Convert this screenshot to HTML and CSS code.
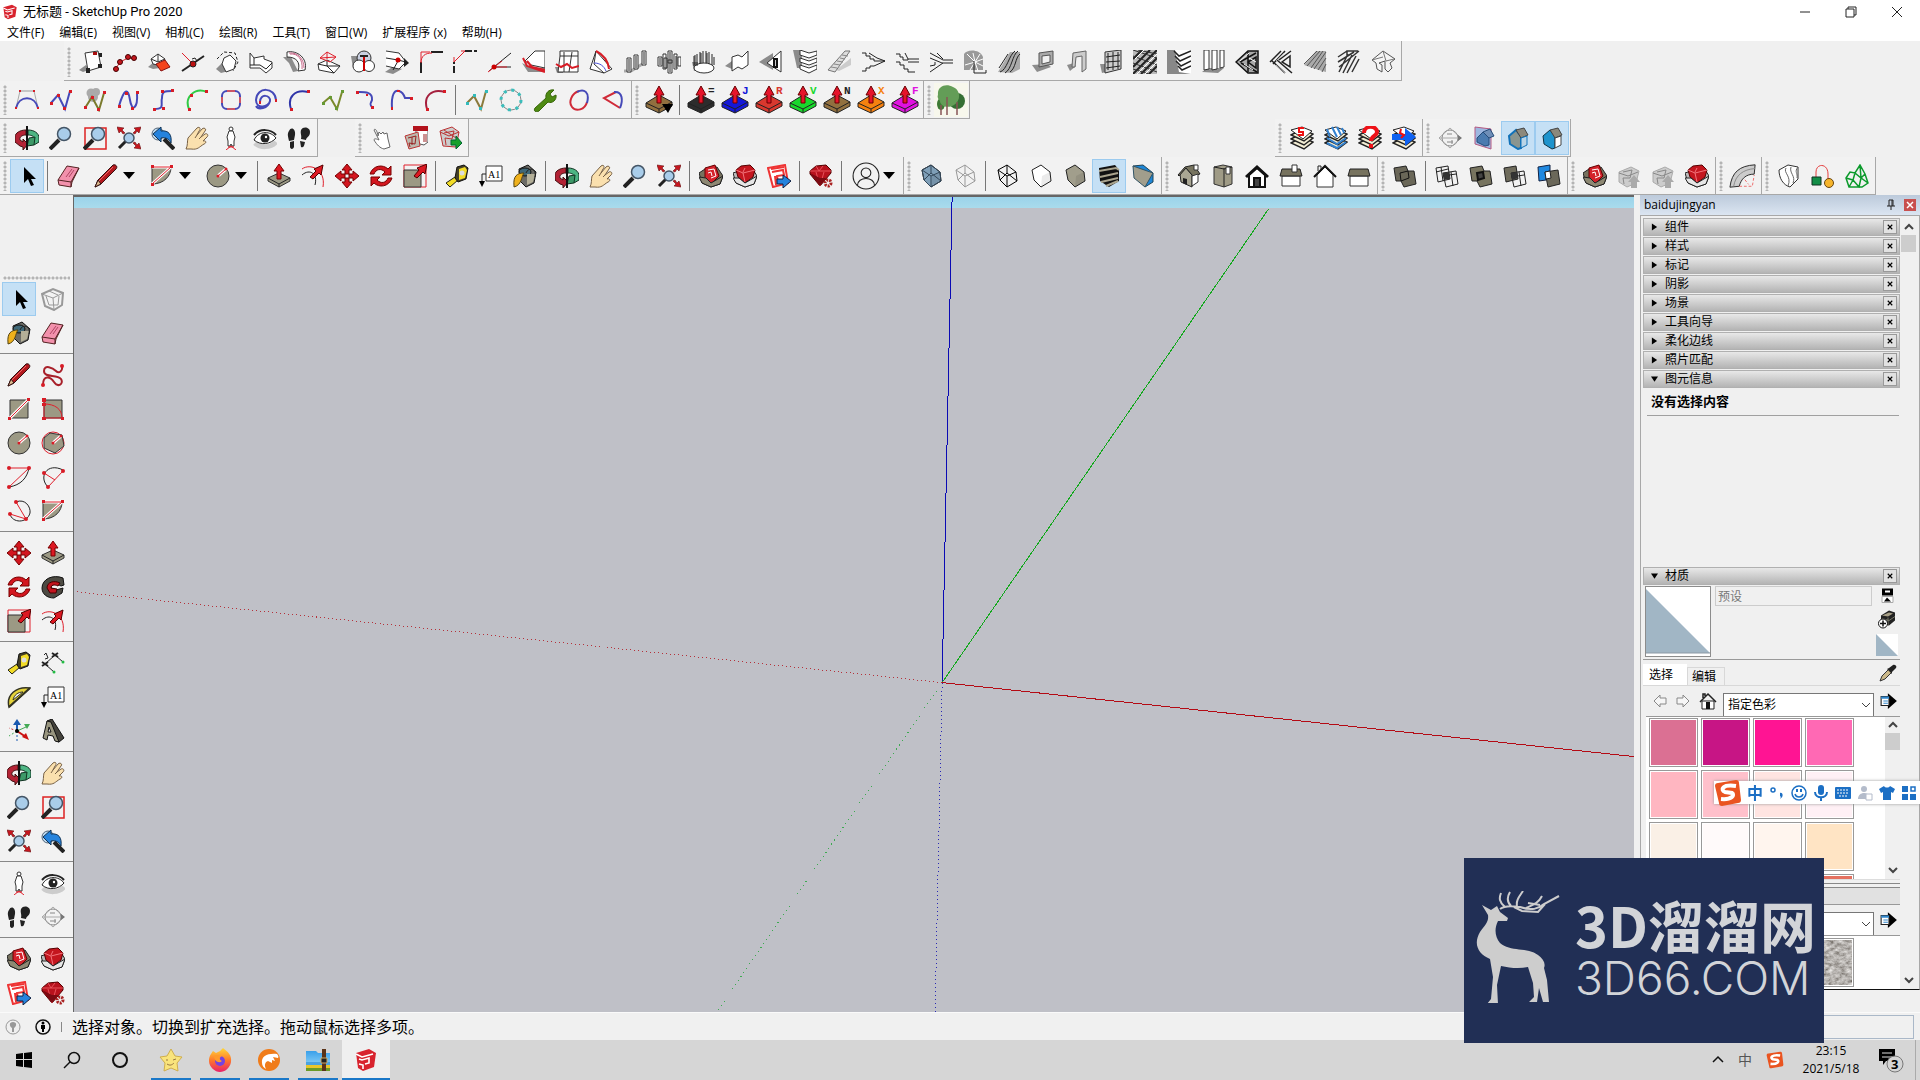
FILE: index.html
```html
<!DOCTYPE html>
<html lang="zh-CN">
<head>
<meta charset="utf-8">
<title>无标题 - SketchUp Pro 2020</title>
<link rel="stylesheet" href="styles.css">
</head>
<body>
<svg class="sprite" aria-hidden="true">
<defs>
<linearGradient id="fox" x1="0" y1="0" x2="0" y2="1"><stop offset="0" stop-color="#ffd83a"/><stop offset=".5" stop-color="#ff7a2a"/><stop offset="1" stop-color="#e8206a"/></linearGradient>
<linearGradient id="sky" x1="0" y1="0" x2="0" y2="1"><stop offset="0" stop-color="#3aa0ea"/><stop offset="1" stop-color="#7cc8f5"/></linearGradient>
<filter id="stone"><feTurbulence type="fractalNoise" baseFrequency=".18 .3" numOctaves="4"/><feColorMatrix values=".9 0 0 0 .02  .9 0 0 0 0  .9 0 0 0 -.02  0 0 0 0 1"/></filter>
</defs>
<!-- application mark -->
<symbol id="i-app" viewBox="0 0 24 24"><path d="M2 5 15 1l7 4-2 14-11 4-5-3z" fill="#d8232e"/><path d="M2 6l6 3 11-3M5 11l3 1 7-2v5l-4 1M5 16l4 1v4" fill="none" stroke="#fff" stroke-width="1.6"/></symbol>
<!-- shape and architecture plug-ins -->
<symbol id="i-stand" viewBox="0 0 24 24"><path d="M0 20l7-5 3 5-6 2z" class="g"/><path d="M6 3l13-2 3 16-13 4z" class="w"/><path d="M14 2h4v3h-4z" fill="#a11"/><path d="M7 18h4v5H7zM19 14h4v4h-4zM20 3h3v4h-3z" fill="#222"/></symbol>
<symbol id="i-dots" viewBox="0 0 24 24"><path d="M2 20l5-8 8-4 8 1" class="r"/><g fill="#c3161d" stroke="#400"><circle cx="3" cy="19" r="2.5"/><circle cx="7" cy="12" r="2.5"/><circle cx="15" cy="7" r="2.5"/><circle cx="21" cy="8" r="2.5"/></g></symbol>
<symbol id="i-flip" viewBox="0 0 24 24"><path d="M1 17l6-5 6 6-7 1z" class="g"/><path d="M4 9l7-5 7 5-3 7-9-2zM4 9l7 3 7-3M11 4v8" class="w"/><path d="M9 14l9-4 5 7-9 4z" fill="#f4431d" stroke="#811"/></symbol>
<symbol id="i-cross" viewBox="0 0 24 24"><path d="M1 21 23 6" class="k2"/><path d="M1 3l12 12" class="r"/><circle cx="12" cy="14" r="3" fill="#b11" stroke="#222"/><path d="M11 9l3-1 2 3" class="k"/></symbol>
<symbol id="i-dashpoly" viewBox="0 0 24 24"><path d="M1 19l6-6 7 8-8 2z" class="g"/><path d="M2 9l7-7 11 1 3 9-5 9" class="k" stroke-dasharray="3 2"/><path d="M9 8l6-3 6 6-2 8-8 3-4-8z" class="w"/></symbol>
<symbol id="i-block" viewBox="0 0 24 24"><path d="M1 3l4 5 10-2v3l8 3v6l-6 5-6-5H1z" class="w"/><path d="M1 15h10l6 4 6-6M5 8v7" class="k"/></symbol>
<symbol id="i-tube" viewBox="0 0 24 24"><path d="M0 7h8l7 14-5 1-4-9z" class="g"/><path d="M4 2C14 0 25 8 22 20l-7 1c3-9-2-14-11-14z" class="w"/><path d="M7 4c8-1 13 6 12 15M6 3c9-1 15 6 15 15" fill="none" stroke="#c7698a"/></symbol>
<symbol id="i-roofbox" viewBox="0 0 24 24"><path d="M1 14l9-4 13 6-6 7-15-3z" class="w"/><path d="M10 10v6l7 7M1 14l9 2 13 0" class="k"/><path d="M3 8l7-6 9 5-6 5zM3 8l16-1M10 2v7" class="r"/></symbol>
<symbol id="i-spheres" viewBox="0 0 24 24"><path d="M0 6h9v12H2z" class="g"/><circle cx="13" cy="8" r="7" fill="#c9cfe0" stroke="#333"/><circle cx="8" cy="16" r="6" class="w"/><circle cx="18" cy="16" r="5.5" class="w"/><path d="M13 5v16" stroke="#c00" stroke-width="2"/><path d="M9 6h8" class="k2"/></symbol>
<symbol id="i-corner" viewBox="0 0 24 24"><path d="M0 22l9-6 8 3-9 5z" class="g"/><path d="M1 1l13 2 7 9-7 7-13-3" class="w"/><path d="M1 8l12 2 8 2M13 11l-5 9" class="k"/><circle cx="13" cy="10" r="2.5" fill="#c00"/><path d="M19 8l5 5-5 4z" fill="#222"/></symbol>
<symbol id="i-fillet" viewBox="0 0 24 24"><path d="M12 2h12M2 23V12" class="k2"/><path d="M2 13C2 6 6 3 13 3M2 12V2h9" class="r"/></symbol>
<symbol id="i-chamfer" viewBox="0 0 24 24"><path d="M12 1h12M1 23V12" class="k2" stroke-dasharray="7 2"/><path d="M1 12 12 1H8M1 12V7" class="r"/></symbol>
<symbol id="i-angle" viewBox="0 0 24 24"><path d="M2 21 24 3M6 17h18" class="k"/><path d="M1 22l14-11M7 17h13" class="r"/><circle cx="7" cy="17" r="2.500" fill="#c00"/></symbol>
<symbol id="i-polyred" viewBox="0 0 24 24"><path d="M1 13l6 9h17v-4H11z" class="g"/><path d="M4 11 14 1h10v17L10 15z" class="w"/><path d="M2 8l4 8 18 6M6 11l5 6 13 3" class="r2"/></symbol>
<symbol id="i-cage" viewBox="0 0 24 24"><path d="M0 17h8v6H2z" class="g"/><path d="M5 1h18v5H5zM5 6 3 22h20V6M9 2v20M17 2l-3 20" class="w"/><path d="M1 14l5 3 6-3 5 4 7-2" class="r2"/></symbol>
<symbol id="i-sail" viewBox="0 0 24 24"><path d="M7 1 1 19l14 4 8-4zM7 1l-2 13 10 9" class="w" stroke="#666"/><path d="M7 1c8 4 12 9 13 18" class="r2"/><path d="M5 13c6 0 10 3 12 8" class="b"/></symbol>
<symbol id="i-pillars" viewBox="0 0 24 24"><path d="M1 21h7l13-8" stroke="#aaa" stroke-width="3" fill="none"/><path d="M4 8h4v14H4zM11 5h4v14h-4zM19 1h4v14h-4z" class="w"/><path d="M6 9v12M13 6v12M21 2v12" class="k"/></symbol>
<symbol id="i-columns" viewBox="0 0 24 24"><path d="M1 7h4v9H1zM6 4h3v15H6zM11 1h4v12h-4zM17 4h3v15h-3zM11 10h4v13h-4zM21 7h3v9h-3zM7 8h3v10H7z" class="w"/><path d="M13 2v20M3 8v7M19 6v12" class="k"/></symbol>
<symbol id="i-arc" viewBox="0 0 24 24"><path d="M1 12h6v9H3z" class="g"/><ellipse cx="13" cy="18" rx="10" ry="5" class="w"/><path d="M3 6v10M6 4v12M9 2v12M12 1v12M15 1v12M18 2v12M21 4v11M23 7v8" class="k"/><path d="M4 5v10M10 3v10M16 3v10" class="k"/></symbol>
<symbol id="i-fold" viewBox="0 0 24 24"><path d="M0 16l7-5v8z" class="g"/><path d="M7 7l6-2 4 2 6-6v14l-6 4-4-2-6 4z" class="w"/></symbol>
<symbol id="i-wedge" viewBox="0 0 24 24"><path d="M0 12 14 3v17z" class="g"/><path d="M8 13 22 1v21z" class="w"/><path d="M15 9h3v8h-3z" fill="#ccc" stroke="#111" stroke-width="2"/></symbol>
<symbol id="i-shelves" viewBox="0 0 24 24"><path d="M0 0h9v18H4z" class="g"/><path d="M7 0l9 3 8-2v4l-8 3-9-3zM7 8l9 3 8-3v4l-8 3-9-3zM7 15l9 3 8-3v4l-8 4-9-4z" class="w"/></symbol>
<symbol id="i-ramp" viewBox="0 0 24 24"><path d="M9 20 24 8v7l-12 6z" fill="#ccc"/><path d="M1 20 18 1h5L8 22z" fill="#ddd" stroke="#777"/><path d="M4 17l6 1M7 14l6 1M10 11l6 1M13 8l5 1M15 5l6 1" stroke="#888"/></symbol>
<symbol id="i-stair1" viewBox="0 0 24 24"><path d="M1 3h4v3h4v3h4v2h11L13 16H9v2H5v3H1M8 3l8 5 8 3" class="k"/></symbol>
<symbol id="i-stair2" viewBox="0 0 24 24"><path d="M1 4h4v3h3v3h5v-1h11M1 12h4v3h4v4h4v3h7M13 12h11M10 3l3 6" class="k"/></symbol>
<symbol id="i-stair3" viewBox="0 0 24 24"><path d="M1 3l13 7h10M1 8l12 5h11M1 22l13-9M1 16l5-1v-3M8 3l6 6" class="k"/></symbol>
<symbol id="i-spiral" viewBox="0 0 24 24"><path d="M1 4c3-5 16-5 19 3v13H1z" fill="#999"/><path d="M12 12 4 4M12 12l-2-9M12 12l5-8M12 12l8-3M12 12l8 4M12 12l3 9M12 12l-5 8M12 12 2 15" stroke="#fff"/><path d="M11 11v12h12v-3" class="k"/></symbol>
<symbol id="i-escalator" viewBox="0 0 24 24"><path d="M1 22 13 2h10v17l-8 4z" fill="#aaa"/><path d="M3 22C10 20 12 5 18 1M8 23c7-4 7-18 13-22M13 22c6-4 5-14 10-18M2 18l9-14" class="k"/></symbol>
<symbol id="i-frame" viewBox="0 0 24 24"><path d="M1 15l15-1 4 3-14 5z" class="g"/><path d="M8 3l14-2v13L8 17z" fill="#aaa" stroke="#555"/><path d="M11 6l8-1v7l-8 2z" fill="#f1f1f1" stroke="#555"/></symbol>
<symbol id="i-door" viewBox="0 0 24 24"><path d="M2 15l7-2 2 3-6 5z" class="g"/><path d="M7 17 8 3l13-2v18l-4 3V6l-6 1-1 10z" fill="#ccc" stroke="#666"/></symbol>
<symbol id="i-grid" viewBox="0 0 24 24"><path d="M1 14h6v8l-4 1z" class="g"/><path d="M6 2 22 0v19L6 23z" fill="#ccc" stroke="#333"/><path d="M9 3v17M14 2v18M19 2v17M7 7l14-2M7 12l14-1M7 18l14-2" class="k"/></symbol>
<symbol id="i-lattice" viewBox="0 0 24 24"><path d="M0 0h24v24H0z" fill="#bbb"/><path d="M0 9 9 0M0 17 17 0M0 24 24 0M8 24 24 8M16 24l8-8" class="k2"/><path d="M0 6l24 9M0 0l24 8M0 13l24 9M5 0l19 4M0 19l16 5" stroke="#333"/><path d="M2 9 11 0M4 24 24 4M12 24l12-12" stroke="#fff"/></symbol>
<symbol id="i-chevron" viewBox="0 0 24 24"><path d="M0 0h24v24H0z" fill="#888"/><path d="M8 0h16v24l-12-2z" fill="#fff"/><path d="M7 1l5 5L24 1M8 6l5 5 11-5M9 11l5 5 10-5M11 16l4 4 9-4" fill="none" stroke="#222" stroke-width="1.500"/></symbol>
<symbol id="i-posts" viewBox="0 0 24 24"><path d="M1 22l5-4h17l-6 5z" class="g"/><path d="M3 0v20l5-1V0zM11 0v20l5-1V0zM19 0v18l4-1V0z" class="w"/></symbol>
<symbol id="i-truss" viewBox="0 0 24 24"><path d="M1 12 13 1h10v22H13z" fill="#aaa" stroke="#111" stroke-width="1.500"/><path d="M5 12 21 3M6 13l16 9M13 2v20M13 12l8-5v11z" stroke="#111" stroke-width="1.500" fill="none"/><path d="M5 11 14 3M9 14l9 6M14 8l7 4" stroke="#fff"/></symbol>
<symbol id="i-truss2" viewBox="0 0 24 24"><path d="M1 12 12 1M4 14l12-13M2 10l14 13M8 10l15 13M10 10 22 1M13 12l8-6v11z" fill="none" stroke="#222" stroke-width="1.500"/><path d="M7 11l8-8M7 15l9 8" stroke="#aaa"/></symbol>
<symbol id="i-slats" viewBox="0 0 24 24"><path d="M1 15 13 1h10v21l-4-1z" fill="#aaa"/><path d="M1 14 14 1M4 16 17 1M8 18 20 1M11 19 23 2M15 20l8-12M19 22l4-8" stroke="#555"/></symbol>
<symbol id="i-slats2" viewBox="0 0 24 24"><path d="M2 22 11 4M6 23 15 5M10 23l9-17M15 22l7-13M1 7l9-6M1 12 17 2M2 17 22 1M10 6V1h11" fill="none" stroke="#333" stroke-width="1.500"/></symbol>
<symbol id="i-hip" viewBox="0 0 24 24"><path d="M12 1 1 10l4 3 1 6 5 3v-7l-3-2 6-2v8l3 3 4-4-2-5 5-4z" fill="#f6f6f6" stroke="#555"/><path d="M12 1l3 10 8-2M1 10l11-3" stroke="#777" fill="none"/></symbol>
<!-- curves -->
<symbol id="i-c1" viewBox="0 0 24 24"><path d="M5 3h14" stroke="#999"/><path d="M5 3 1 20M19 3l4 17" stroke="#aaa"/><path d="M1 20C4 7 20 7 23 20" class="b2"/><path d="M4 2h2v2H4zM18 2h2v2h-2zM0 19h2v2H0zM22 19h2v2h-2z" class="R"/></symbol>
<symbol id="i-c2" viewBox="0 0 24 24"><path d="M2 15 9 7l7 14 5-18" class="b2"/><path d="M1 14h3v3H1zM8 6h3v3H8zM14 19h3v3h-3zM20 2h3v3h-3z" class="R"/></symbol>
<symbol id="i-c3" viewBox="0 0 24 24"><circle cx="8" cy="5" r="4.500" fill="#aaa"/><circle cx="13" cy="4" r="4" fill="#aaa"/><circle cx="10" cy="9" r="5" fill="#aaa"/><path d="M2 20 9 9l7 13 5-17" fill="none" stroke="#7a7a2c" stroke-width="2"/><path d="M1 18h3v3H1zM8 8h3v3H8zM14 20h3v3h-3zM20 3h3v3h-3z" class="R"/></symbol>
<symbol id="i-c4" viewBox="0 0 24 24"><path d="M2 18C7 1 11-1 13 12s8 8 7-7" class="b2"/><path d="M1 17h3v3H1zM8 4h3v3H8zM14 19h3v3h-3zM19 3h3v3h-3z" class="R"/></symbol>
<symbol id="i-c5" viewBox="0 0 24 24"><path d="M3 21c12 0 6-5 8-11 0-7 3-7 10-7" class="b2"/><path d="M2 20h3v3H2zM11 19h3v3h-3zM10 2h3v3h-3zM20 1h3v3h-3z" class="R"/></symbol>
<symbol id="i-c6" viewBox="0 0 24 24"><path d="M4 21C-1 9 10-1 22 4" fill="none" stroke="#31ca44" stroke-width="2"/><path d="M3 20h3v3H3zM5 6h3v3H5zM20 2h3v3h-3z" class="R"/></symbol>
<symbol id="i-c7" viewBox="0 0 24 24"><rect x="3" y="3" width="18" height="18" rx="5" class="b2"/><path d="M8 3h8M8 21h8M3 9v6M21 9v6" stroke="#c56" stroke-width="2"/></symbol>
<symbol id="i-c8" viewBox="0 0 24 24"><path d="M7 14c0-9 11-7 10-1s-14 9-14-1C4-2 22-1 23 12M17 13c-2 8-12 9-14 5" class="b2"/><path d="M6 13h2v3H6zM22 11h2v3h-2z" class="R"/></symbol>
<symbol id="i-c9" viewBox="0 0 24 24"><path d="M4 21C0 9 8 1 21 4" fill="none" stroke="#3035a8" stroke-width="2"/><path d="M3 20h3v3H3zM20 2h3v3h-3z" class="R"/></symbol>
<symbol id="i-c10" viewBox="0 0 24 24"><path d="M2 15 9 9l7 12 5-17" fill="none" stroke="#7a8a2c" stroke-width="2"/><path d="M1 14h3v3H1zM8 8h3v3H8zM14 19h3v3h-3zM20 2h3v3h-3z" fill="#693"/></symbol>
<symbol id="i-c11" viewBox="0 0 24 24"><path d="M2 4c6 0 16-1 15 8-1 3-3 4 0 7" class="b2"/><path d="M1 3h3v3H1zM11 6h2v2h-2zM16 18h3v3h-3z" class="R"/></symbol>
<symbol id="i-c12" viewBox="0 0 24 24"><path d="M3 21C2 5 6 2 10 3s5 4 6 7h6" class="b2"/><path d="M2 19h2v3H2zM8 2h3v2H8zM21 9h3v3h-3z" class="R"/></symbol>
<symbol id="i-c13" viewBox="0 0 24 24"><path d="M4 21C0 8 9 0 22 4" fill="none" stroke="#a5203e" stroke-width="2"/><path d="M3 20h3v3H3zM20 2h3v3h-3z" class="R"/></symbol>
<symbol id="i-c14" viewBox="0 0 24 24"><path d="M2 15l7-7 7 13 5-18" fill="none" stroke="#8a7a3c" stroke-width="2"/><path d="M1 14h3v3H1zM8 6h3v3H8zM14 19h3v3h-3zM20 2h3v3h-3z" fill="#3bb"/></symbol>
<symbol id="i-c15" viewBox="0 0 24 24"><circle cx="12" cy="12" r="10" fill="none" stroke="#888"/><circle cx="12" cy="12" r="10" fill="none" stroke="#3bbdbb" stroke-width="3" stroke-dasharray="3 4.850"/></symbol>
<symbol id="i-wrench" viewBox="0 0 24 24"><path d="M2 20 13 10c-1-5 3-9 8-8l-4 4 2 3 4-2c1 5-4 9-8 7L6 23c-3 2-6 0-4-3z" fill="#4e8a12" stroke="#39660a"/></symbol>
<symbol id="i-c16" viewBox="0 0 24 24"><path d="M12 3C5 5 1 14 5 19c4 5 13 3 15-5" fill="none" stroke="#d02a38" stroke-width="2"/><path d="M10 4c7-4 13 0 10 11" class="b2"/></symbol>
<symbol id="i-c17" viewBox="0 0 24 24"><path d="M19 20 3 10l12-6" fill="none" stroke="#d02a38" stroke-width="2"/><path d="M13 4c9-1 9 9 6 16" class="b2"/></symbol>
<!-- joint push pull -->
<symbol id="i-jpush" viewBox="0 0 28 28"><path d="M1 17 14 9l13 7v4l-13 7-13-6z" fill="currentColor" stroke="#222"/><path d="M1 17l13 6 13-7M14 23v4" fill="none" stroke="#222"/><path d="M12 17V9H9l5-9 5 9h-3v8z" fill="#e5142a" stroke="#600"/></symbol>
<!-- camera and navigation -->
<symbol id="i-orbit" viewBox="0 0 24 24"><path d="M11 4C5 4 0 7 0 11v5l5 4 3 1v3l5-6-5-5v3l-3-2c-1-3 2-5 6-5z" fill="#b32335" stroke="#411"/><path d="M13 4c6 0 11 3 11 8v4l-5 3-3-4 3-2c1-2-2-4-6-4z" fill="#4db583" stroke="#132"/><path d="M14 12l6-1-1 8-7 1z" fill="#3d9968" stroke="#132"/><path d="M12 0v24" stroke="#111" stroke-width="2"/></symbol>
<symbol id="i-zoom" viewBox="0 0 24 24"><path d="M1 23l9-9" stroke="#222" stroke-width="4"/><circle cx="15" cy="8" r="6.500" fill="#a9cdea" stroke="#456" stroke-width="1.500"/></symbol>
<symbol id="i-zoomwin" viewBox="0 0 24 24"><path d="M2 2h21v21H2z" fill="none" stroke="#d22" stroke-width="1.500"/><path d="M1 23l9-9" stroke="#222" stroke-width="4"/><circle cx="15" cy="8" r="6.500" fill="#a9cdea" stroke="#456" stroke-width="1.500"/></symbol>
<symbol id="i-extents" viewBox="0 0 24 24"><path d="M2 22l7-7" stroke="#222" stroke-width="3"/><circle cx="12" cy="12" r="5" fill="#a9cdea" stroke="#456" stroke-width="1.500"/><path d="M0 1l7 1-2 2 3 3-2 1-2-3-2 2zM24 1l-7 1 2 2-3 3 2 1 2-3 2 2zM24 23l-7-1 2-2-3-3 2-1 2 3 2-2z" fill="#c8161f" stroke="#611" stroke-width=".6"/></symbol>
<symbol id="i-prev" viewBox="0 0 24 24"><circle cx="7" cy="8" r="6" fill="#bcd8ee" stroke="#567"/><path d="M13 13l10 10" stroke="#222" stroke-width="4"/><path d="M2 8l8-7v4c8-1 11 4 10 12-2-4-5-6-10-5v4z" fill="#2583dd" stroke="#135"/></symbol>
<symbol id="i-pan" viewBox="0 0 24 24"><path d="M1 23c2-4 1-7 2-11l9-10c3-2 4 1 2 3l-2 4 5-6c2-2 5 0 3 2l-4 6 4-3c2-1 4 1 2 3l-4 4c3-1 4 2 1 3-5 3-6 6-13 5z" fill="#fae0ae" stroke="#776146"/><path d="M12 9l-2 3M16 11l-2 2" stroke="#776146"/></symbol>
<symbol id="i-person" viewBox="0 0 24 24"><circle cx="12" cy="3" r="2" class="w"/><path d="M10 5h4l2 6-1 4v5h-2l-1-2-1 2H9v-5l-1-4z" class="w"/><path d="M7 24l5-4 5 4M9 21h6" class="r"/></symbol>
<symbol id="i-eye" viewBox="0 0 24 24"><path d="M2 17c5 5 16 5 21-1" stroke="#ccc" stroke-width="5" fill="none"/><path d="M1 14C6 4 18 5 23 12 18 18 8 20 1 14z" fill="#fff" stroke="#222"/><circle cx="12" cy="12" r="4.500" fill="#222"/><circle cx="13" cy="11" r="1.200" fill="#fff"/><path d="M1 9C7 2 18 3 23 9" stroke="#222" stroke-width="2" fill="none"/></symbol>
<symbol id="i-feet" viewBox="0 0 24 24"><path d="M2 5C4 0 9 3 8 9l-1 5-5 1C1 10 0 8 2 5zM14 4c2-4 9-3 9 2s-4 5-4 8l-5-1c1-4-1-5 0-9zM3 16l4-1v6c-1 3-4 2-4 0zM13 15l5 1c-1 5-2 6-4 5z" fill="#222"/></symbol>
<symbol id="i-section" viewBox="0 0 24 24"><circle cx="12" cy="12" r="8" fill="none" stroke="#888"/><path d="M1 12h22M1 12l11-10 11 10-11 10z" fill="none" stroke="#aaa"/><path d="M20 9l4 3-4 3z" fill="#777"/><path d="M9 8h5M9 16h6M14 14v4" stroke="#888"/></symbol>
<symbol id="i-finger" viewBox="0 0 24 24"><path d="M4 4c1-2 3 0 4 6l1-4 2 2 2-2 1 2 3-1 1 6 2 8-6 2c-4-1-7-4-10-9 0-2 3-1 5 0z" fill="#fff" stroke="#666"/></symbol>
<symbol id="i-comp1" viewBox="0 0 24 24"><path d="M12 1h12v15l-4 3-8-2z" fill="#fff" stroke="#555"/><path d="M9 0h15v5H9z" fill="#b3121c"/><path d="M1 10l13-4 2 14-11 3z" fill="#bdb9ae" stroke="#b33"/><path d="M4 12l8-2-1 8-6-1 1 4M8 11v8M20 8v8M22 8v8" fill="none" stroke="#922"/></symbol>
<symbol id="i-comp2" viewBox="0 0 24 24"><path d="M2 5 14 1l7 5-3 15-13-1z" fill="#ccc" stroke="#b33"/><path d="M6 7l10-2-2 8-7-1 1 7M6 4l12 8M2 6l9 4 10-4" fill="none" stroke="#b33"/><path d="M13 14h5v-4l6 7-6 6v-4h-5z" fill="#17a02c" stroke="#063"/></symbol>
<!-- tags -->
<symbol id="i-tags" viewBox="0 0 24 24"><g fill="#f2ecd3" stroke="#222" stroke-width="1.500"><path d="M1 17l11-6 11 5-9 7z"/><path d="M1 13l11-6 11 5-9 7z"/><path d="M1 9l11-6 11 5-9 7z"/></g><path d="M1 4 12 1l10 4-9 8z" fill="#fff" stroke="#222"/></symbol>
<symbol id="i-tag-s" viewBox="0 0 24 24"><use href="#i-tags"/><path d="M14 2H9v4h4v3H8" fill="none" stroke="#e11" stroke-width="2"/></symbol>
<symbol id="i-tag-b" viewBox="0 0 24 24"><use href="#i-tags"/><path d="M3 3l3 8M8 1l5 10M13 1l4 8M18 2l2 5M3 12l10 6 9-6M3 17l10 5 9-6" fill="none" stroke="#3281cf" stroke-width="2"/></symbol>
<symbol id="i-tag-q" viewBox="0 0 24 24"><use href="#i-tags"/><path d="M6 7c0-8 13-8 13-1 0 4-6 4-6 9M13 18v4" fill="none" stroke="#ee1218" stroke-width="4"/></symbol>
<symbol id="i-tag-a" viewBox="0 0 24 24"><use href="#i-tags"/><path d="M0 8h13V2l11 9-11 9v-6H0z" fill="#0f62f2"/><path d="M9 3l-1 4 4 2-3 3" stroke="#e11" stroke-width="2" fill="none"/></symbol>
<symbol id="i-sec-h" viewBox="0 0 24 24"><path d="M3 1l16 2v20L3 18z" fill="#9db7e0" stroke="#b55a82"/><path d="M5 12l6-6 6 5v8l-4 1-8-4z" fill="#4a7bb0" stroke="#264c7a"/><path d="M11 6l7-3 4 7-5 2z" fill="#6f8fb8" stroke="#264c7a"/></symbol>
<symbol id="i-sec-1" viewBox="0 0 24 24"><path d="M3 10l7-6 5 6v12l-3 1-8-5z" fill="#8a958f" stroke="#1272b8" stroke-width="2"/><path d="M10 4l8-2 4 7-7 3z" fill="#8c897c" stroke="#444"/><path d="M15 12l6-2v9l-6 3z" fill="#b9d4e6" stroke="#1272b8"/></symbol>
<symbol id="i-sec-2" viewBox="0 0 24 24"><path d="M3 10l7-6 5 6v12l-3 1-8-5z" fill="#1f94cd" stroke="#134"/><path d="M10 4l8-2 4 7-7 3z" fill="#8c897c" stroke="#444"/><path d="M15 12l6-2v9l-6 3z" fill="#fff" stroke="#444"/></symbol>
<!-- drawing tools -->
<symbol id="i-select" viewBox="0 0 24 24"><path d="M9 3v16l4-4 3 7 3-1-3-6h5z" fill="#000"/></symbol>
<symbol id="i-eraser" viewBox="0 0 24 24"><path d="M1 16 10 2l12 2-7 14-1 5-12-2z" fill="#f291ac" stroke="#522"/><path d="M1 16l13 2 8-14M14 18v5" fill="none" stroke="#522"/><path d="M9 13l6-8M12 13l5-7" stroke="#b04565"/></symbol>
<symbol id="i-pencil" viewBox="0 0 24 24"><path d="M1 23l3-7L19 1c3-1 5 2 3 4L7 20z" fill="#b3191e" stroke="#311"/><path d="M1 23l3-7 3 4z" fill="#dbb98c" stroke="#311"/><path d="M5 17 19 3" stroke="#e66"/></symbol>
<symbol id="i-free" viewBox="0 0 24 24"><path d="M2 22C2 12 9 13 13 19s10 2 7-3C16 11 3 15 3 8S12 5 15 8s7 0 6-5" fill="none" stroke="#a8202a" stroke-width="2"/><circle cx="2" cy="22" r="2" class="R"/><circle cx="21" cy="3" r="2" class="R"/></symbol>
<symbol id="i-rect" viewBox="0 0 24 24"><path d="M3 3h18v18H3z" class="t"/><path d="M3 21 21 3" stroke="#fff" stroke-width="3"/><path d="M3 21 21 3" class="r"/><path d="M1 20h3v3H1zM20 1h3v3h-3z" class="R"/></symbol>
<symbol id="i-rrect" viewBox="0 0 24 24"><path d="M3 3h18v18H3z" class="t"/><path d="M3 3v18h18c0-9-7-14-18-14" class="r"/><path d="M1 1h4v4H1zM1 6h4v3H1zM1 20h4v3H1zM20 20h3v3h-3z" class="R"/></symbol>
<symbol id="i-circle" viewBox="0 0 24 24"><circle cx="12" cy="12" r="11" class="t"/><path d="M12 12l8-7" stroke="#fff" stroke-width="3"/><path d="M12 12l8-7" class="r"/><circle cx="12" cy="12" r="1.500" class="R"/><circle cx="20" cy="5" r="1.500" class="R"/></symbol>
<symbol id="i-polygon" viewBox="0 0 24 24"><circle cx="12" cy="12" r="11" class="r"/><path d="M9 2l12 2 2 11-9 7-11-5V7z" class="t"/><path d="M12 12l8-7" stroke="#fff" stroke-width="3"/><path d="M12 12l8-7" class="r"/><circle cx="12" cy="12" r="1.500" class="R"/><circle cx="20" cy="5" r="1.500" class="R"/></symbol>
<symbol id="i-arc2" viewBox="0 0 24 24"><path d="M2 22C14 20 20 13 22 3" class="k"/><path d="M2 3h20L2 22" class="r"/><circle cx="2" cy="3" r="2" class="R"/><circle cx="22" cy="3" r="2" class="R"/><circle cx="2" cy="22" r="2" class="R"/></symbol>
<symbol id="i-arc3" viewBox="0 0 24 24"><path d="M7 22C-3 12 6-3 22 5" class="k"/><path d="M7 22 22 6M3 8l11 7" class="r"/><circle cx="22" cy="6" r="2" class="R"/><circle cx="7" cy="22" r="2" class="R"/><circle cx="3" cy="8" r="2" class="R"/></symbol>
<symbol id="i-arc4" viewBox="0 0 24 24"><path d="M9 3c9-4 15 5 14 11-3 11-18 10-20 1" class="k"/><path d="M9 3l10 17-16-5" class="r"/><circle cx="9" cy="3" r="2" class="R"/><circle cx="3" cy="15" r="2" class="R"/><circle cx="19" cy="20" r="2" class="R"/></symbol>
<symbol id="i-pie" viewBox="0 0 24 24"><path d="M2 3h19c0 9-7 17-19 17z" class="t"/><path d="M2 20 21 3H2" stroke="#fff" stroke-width="3" fill="none"/><path d="M2 20 21 3H2" class="r"/><path d="M1 1h3v3H1zM20 1h3v3h-3zM1 19h3v3H1z" class="R"/></symbol>
<symbol id="i-push" viewBox="0 0 24 24"><path d="M1 14l11-5 11 5v3l-11 6-11-6z" class="t"/><path d="M1 14l11 6 11-6M12 20v3" class="k"/><path d="M10 15V7H7l5-7 5 7h-3v8z" fill="#dd1822" stroke="#700"/></symbol>
<symbol id="i-offset" viewBox="0 0 24 24"><path d="M1 5C9-1 25 5 22 23" class="r"/><path d="M1 11c8-7 16-1 13 10" class="k"/><path d="M9 13l6-6-2-2 9-4-2 10-2-2-6 6z" fill="#dd1822" stroke="#500"/></symbol>
<symbol id="i-move" viewBox="0 0 24 24"><path d="M12 0l5 6h-3v4h-4V6H7zM12 24l5-6h-3v-4h-4v4H7zM0 12l6-5v3h4v4H6v3zM24 12l-6-5v3h-4v4h4v3z" fill="#d3161f" stroke="#700"/></symbol>
<symbol id="i-rotate" viewBox="0 0 24 24"><path d="M1 10C4 1 14 0 19 5l3-3v9h-9l3-3C12 4 7 5 5 10z" fill="#d3161f" stroke="#700"/><path d="M23 14c-3 9-13 10-18 5l-3 3v-9h9l-3 3c4 4 9 3 11-2z" fill="#d3161f" stroke="#700"/></symbol>
<symbol id="i-scale" viewBox="0 0 24 24"><path d="M1 1h22v22H1z" class="r"/><path d="M1 6h17v17H1z" class="t"/><path d="M11 12l5-6-2-2 10-4-2 10-2-2-6 6z" fill="#dd1822" stroke="#500"/></symbol>
<symbol id="i-follow" viewBox="0 0 24 24"><path d="M1 13C1 4 12-1 22 3l1 7-3 1c-5-3-10-2-10 2l5 2 7-2-1 5-8 5C6 23 1 19 1 13z" fill="#4c4a42" stroke="#111"/><path d="M6 13c0-6 7-8 13-5l-2 3c-4-2-7-1-7 2l6 1-1 4-6 0z" fill="#c3141e" stroke="#400"/></symbol>
<symbol id="i-tape" viewBox="0 0 24 24"><path d="M1 19l9-6 3 3-8 7z" fill="#f2dc26" stroke="#221"/><path d="M12 3l7-2 4 3-2 11-8 3-3-4z" fill="#443f26" stroke="#111"/><path d="M14 5l6-2 2 3-2 8-6 2z" fill="#f2dc26"/><circle cx="17" cy="9" r="2.500" fill="#ddd"/></symbol>
<symbol id="i-text" viewBox="0 0 24 24"><path d="M7 2h16v15H7z" fill="#fff" stroke="#333"/><path d="M7 10H3v10" class="k"/><path d="M0 17h6l-3 6z"/><text x="9" y="14" class="glyph">A1</text></symbol>
<symbol id="i-paint" viewBox="0 0 24 24"><path d="M6 5l9-4 8 7-2 11-8 4-6-6z" fill="#6b6b66" stroke="#111"/><ellipse cx="12" cy="8" rx="6" ry="4" fill="#3f6878" stroke="#111"/><path d="M14 10l8 0-2 8-6 3z" fill="#b3af98"/><path d="M1 22C0 12 4 9 11 9c-3 4-2 12-10 14z" fill="#efb11c" stroke="#541"/><path d="M13 9c2-6 11-5 9 4" fill="none" stroke="#222"/></symbol>
<symbol id="i-dim" viewBox="0 0 24 24"><path d="M4 13 14 4M4 13l9 8M14 4l8 7" class="k"/><path d="M1 11l6 4M1 15l6-4M11 2l6 4M11 6l6-4" class="k2"/><circle cx="13" cy="21" r="1.500" fill="#2b4"/><circle cx="22" cy="11" r="1.500" fill="#2b4"/><path d="M3 4l2-2 2 5-3 1" class="k"/></symbol>
<symbol id="i-protr" viewBox="0 0 24 24"><path d="M2 22C-1 10 9 1 23 3z" fill="#e5d33a" stroke="#332" stroke-width="1.500"/><path d="M6 15c1-5 5-8 10-8z" fill="#f1f1f1" stroke="#332"/><path d="M2 22 23 3" stroke="#332" stroke-width="2"/></symbol>
<symbol id="i-axes" viewBox="0 0 24 24"><path d="M10 12V3" stroke="#1a5ab0" stroke-width="2"/><path d="M10 12v11" stroke="#1a5ab0" stroke-dasharray="2 2"/><path d="M6 6l4-6 4 6z" fill="#1a5ab0"/><path d="M10 12l9-4" stroke="#4a5"/><path d="M10 12 2 9" stroke="#c33" stroke-dasharray="2 2"/><path d="M17 5l6 0-3 5z" fill="#4a5"/><path d="M10 12l9 6" stroke="#c11" stroke-width="2"/><path d="M10 12l-8 5" stroke="#4a5" stroke-dasharray="2 2"/><path d="M19 14l3 7-7-3z" fill="#c11"/><circle cx="10" cy="12" r="2"/></symbol>
<symbol id="i-text3d" viewBox="0 0 24 24"><path d="M6 2l5-2 12 19-5 4-3-1z" fill="#45433c" stroke="#111"/><path d="M2 19 6 2l4 1 8 20-4-1-2-5-5-1-1 5z" fill="#98957f" stroke="#111"/><path d="M8 8l2 5H7z" fill="#f1f1f1" stroke="#111"/></symbol>
<symbol id="i-comp" viewBox="0 0 24 24"><path d="M1 7l11-5 10 4-1 12-8 5-9-4z" fill="none" stroke="#999" stroke-width="2"/><path d="M1 7l11 4 10-5M12 11l1 12M5 9l3 9 9 0 1-9M8 4l9 4" fill="none" stroke="#999"/></symbol>
<!-- warehouse -->
<symbol id="i-wh" viewBox="0 0 24 24"><path d="M0 9l6-4 12-2 6 9-3 8-9 3-9-4z" fill="#77725f" stroke="#222"/><path d="M6 4l10-3 4 11-8 8-6-3z" fill="#d4222b" stroke="#600"/><path d="M9 6l6-1 2 7-5 2M9 9l3-1 1 4" fill="none" stroke="#fff"/><path d="M0 13l7 1 5 5 12-7-3 8-9 3-9-4z" fill="#8d8873" stroke="#222"/></symbol>
<symbol id="i-ew" viewBox="0 0 24 24"><path d="M0 9l6-2 13-3 5 8-3 8-9 3-9-4z" fill="#bbb" stroke="#222"/><path d="M3 6l5-4 9-1 5 5-2 7-8 6-7-6z" fill="#c4161f" stroke="#500"/><path d="M3 6l7 3 12-3M10 9l2 9M12 4l-2 4" fill="none" stroke="#f3747c"/><path d="M0 14l6 0 6 5 12-7-3 8-9 3-9-4z" fill="#e6e6e6" stroke="#222"/></symbol>
<symbol id="i-layout" viewBox="0 0 24 24"><path d="M1 4l17-3 3 18-15 4z" fill="#fff" stroke="#e33" stroke-width="2"/><path d="M5 8l11-2 1 5-7 1 1 7M8 12l1 9M4 5l13-2" fill="none" stroke="#e33" stroke-width="2"/><path d="M10 15h6v-4l8 6-8 7v-4h-6z" fill="#2583dd" stroke="#124"/></symbol>
<symbol id="i-ruby" viewBox="0 0 24 24"><path d="M1 7l6-5 10-1 5 5v3L11 22 1 10z" fill="#b8121d" stroke="#500"/><path d="M1 7l21 0M7 8l4 14 4-14M7 2l3 5 4-5" fill="none" stroke="#e8525b"/><path d="M1 9l10 13 6-8-6 0z" fill="#7c0a12"/><circle cx="19" cy="19" r="3" fill="#f1f1f1" stroke="#a22" stroke-width="3" stroke-dasharray="2 1"/></symbol>
<symbol id="i-user" viewBox="0 0 26 26"><circle cx="13" cy="13" r="12" class="k"/><circle cx="13" cy="10" r="4.500" class="k"/><path d="M5 22c0-9 16-9 16 0" class="k"/></symbol>
<symbol id="i-send" viewBox="0 0 24 24"><path d="M2 8l12-5 8 4-3 12-9 4-8-5z" fill="#ccc" stroke="#aaa"/><path d="M6 8l9-2-2 8-7 0 1 6M2 9l9 3 10-4" fill="none" stroke="#888"/><path d="M14 24v-6h-3l6-7 6 7h-3v6z" fill="#aaa"/></symbol>
<!-- face styles -->
<symbol id="i-cube" viewBox="0 0 24 24"><path d="M3 3 15 1l4 4 3 11-10 7-7-5z" fill="currentColor" stroke="#222"/></symbol>
<symbol id="i-cubew" viewBox="0 0 24 24"><path d="M3 6 12 1l9 7 1 9-10 6-7-7zM3 6l9 6 9-4M12 12v11M12 1v8l-7 7M12 9l10 8" fill="none" stroke="currentColor"/></symbol>
<symbol id="i-solid" viewBox="0 0 24 24"><path d="M3 6 12 1l9 7 1 9-10 6-7-7z" fill="currentColor" stroke="#222"/><path d="M21 8l1 9-10 6 1-11z" fill="#000" fill-opacity=".08"/></symbol>
<symbol id="i-tex" viewBox="0 0 24 24"><path d="M2 4 18 1l4 5v11l-10 6-9-6z" fill="#111"/><path d="M2 7l17-3 3 2M3 13l18-4M4 18l17-4M9 22l12-5" fill="none" stroke="#aaa48e" stroke-width="2"/></symbol>
<symbol id="i-mono" viewBox="0 0 24 24"><path d="M2 2 12 1l10 8 0 9-8 5z" fill="#1d86d6" stroke="#245"/><path d="M2 2l20 7-8 14-11-9z" fill="#a19e8c" stroke="#356"/></symbol>
<!-- views -->
<symbol id="i-iso" viewBox="0 0 24 24"><path d="M3 10l6-6 6 7v12l-11-5z" fill="#aaa794" stroke="#222"/><path d="M1 11 8 3l9-2 6 9-7 2-7-8-7 8z" fill="#77745f" stroke="#222"/><path d="M15 12l6-2v8l-6 4z" class="w"/><path d="M6 14l4 1v6l-4-2z" fill="#222"/><path d="M17 1h4v5h-4z" class="w"/></symbol>
<symbol id="i-top" viewBox="0 0 24 24"><path d="M3 3l9-2 9 2v17l-8 3-10-3z" fill="#9f9b86" stroke="#333"/><path d="M13 4v19M3 3l10 2 8-2" class="k"/><path d="M15 3h4v7h-4z" class="w"/></symbol>
<symbol id="i-front" viewBox="0 0 24 24"><path d="M4 11l8-7 8 7v12H4z" fill="#fff" stroke="#111" stroke-width="2"/><path d="M1 13 12 3l11 10" fill="none" stroke="#111" stroke-width="3"/><path d="M9 14h6v9H9z" fill="#444" stroke="#111" stroke-width="2"/></symbol>
<symbol id="i-right" viewBox="0 0 24 24"><path d="M3 12h18v10H3z" class="w"/><path d="M1 12l2-7h18l2 7z" fill="#77735f" stroke="#222"/><path d="M13 1h5v7h-5z" class="w"/></symbol>
<symbol id="i-back" viewBox="0 0 24 24"><path d="M4 11l8-8 8 8v12H4z" class="w"/><path d="M1 13 12 2l11 11" fill="none" stroke="#111" stroke-width="2"/><path d="M5 7V2h3v3" class="k"/></symbol>
<symbol id="i-left" viewBox="0 0 24 24"><path d="M3 12h18v10H3z" class="w"/><path d="M1 12l2-7h18l2 7z" fill="#77735f" stroke="#222"/></symbol>
<!-- solids -->
<symbol id="i-s1" viewBox="0 0 24 24"><path d="M1 4l12-2 2 5 6 0 2 13-12 3-3-6-5 0z" fill="#6a6758" stroke="#222"/><path d="M8 17l-1-8 8-2 1 7z" fill="none" stroke="#111"/></symbol>
<symbol id="i-s2" viewBox="0 0 24 24"><path d="M1 4l12-2 2 13-12 3zM8 9l13-2 2 13-12 3zM1 8l12-3M8 12l13-2M6 3l2 14M16 8l2 14" class="k"/><path d="M8 9l6-1 1 7-6 1z" fill="#333"/></symbol>
<symbol id="i-s3" viewBox="0 0 24 24"><path d="M1 4l12-2 2 5 6 0 2 13-12 3-3-6-5 0z" fill="#77745f" stroke="#222"/><path d="M8 9l6-1 1 6-6 2z" fill="#444" stroke="#111" stroke-width="2"/></symbol>
<symbol id="i-s4" viewBox="0 0 24 24"><path d="M1 4l12-2 2 13-12 3z" fill="#6f6c5c" stroke="#222"/><path d="M8 9l13-2 2 13-12 3zM8 13l13-2M16 8l2 14" class="k"/><path d="M8 9l6-1 1 6-6 2z" fill="#333"/></symbol>
<symbol id="i-s5" viewBox="0 0 24 24"><path d="M8 8l13-2 2 14-12 3z" fill="#6b685a" stroke="#222"/><path d="M1 3l12-2v6l-5 1 1 8-7 1z" fill="#2089e0" stroke="#124"/><path d="M8 8l5-1 1 7-5 1z" fill="#fff" stroke="#222"/></symbol>
<symbol id="i-arcbig" viewBox="0 0 30 26"><path d="M1 25C3 9 11 2 28 1l-1 10c-9 0-14 5-16 13z" fill="#ccc" stroke="#222"/><path d="M11 24l14 0 2-12M17 17l4 5" stroke="#e66" fill="none" stroke-dasharray="3 2"/><path d="M5 24C7 12 15 6 28 5" fill="none" stroke="#888"/></symbol>
<symbol id="i-vase" viewBox="0 0 24 24"><path d="M2 6 11 1l10 2v12l-8 8c-7-2-11-9-11-17z" class="w"/><path d="M9 4c-3 5 6 8 2 18M14 3c-2 6 5 9 2 16M21 3c-4 5 0 6-1 11" fill="none" stroke="#666"/></symbol>
<symbol id="i-node" viewBox="0 0 24 24"><path d="M5 14V8c0-9 12-9 12 2v6" fill="none" stroke="#e53f3f"/><path d="M1 13h9v8H1z" fill="#138d47" stroke="#132"/><circle cx="18" cy="19" r="4.500" fill="#f6b42b" stroke="#641"/></symbol>
<symbol id="i-gem" viewBox="0 0 24 24"><path d="M1 14l4-6 5 1 5-8 5 9 3 9-6 4H4zM1 14l7 2 2-7 6 5 4-4M15 1l1 13M8 16l-4 7M8 16l6 7 2-9 7 5" fill="none" stroke="#0c9a2c" stroke-width="1.500"/></symbol>
<symbol id="i-tree" viewBox="0 0 30 30"><circle cx="21" cy="16" r="8" fill="#356f33"/><ellipse cx="5" cy="19" rx="4" ry="6" fill="#3d7a35"/><path d="M2 10C1 1 10-2 17 2c8 3 8 14 1 18-6 4-14 1-14-4-2-2-3-4-2-6z" fill="#639d57"/><path d="M11 12v18M21 17v13M5 20v10" stroke="#855" stroke-width="1.500"/></symbol>
<!-- panel glyphs -->
<symbol id="i-tri-r" viewBox="0 0 8 8"><path d="M1 0l6 4-6 4z"/></symbol>
<symbol id="i-tri-d" viewBox="0 0 8 8"><path d="M0 1h8L4 7z"/></symbol>
<symbol id="i-x" viewBox="0 0 8 8"><path d="M1 1l6 6M7 1 1 7" stroke="currentColor" stroke-width="1.500"/></symbol>
<symbol id="i-up" viewBox="0 0 10 10"><path d="M1 7l4-4 4 4" fill="none" stroke="#444" stroke-width="2"/></symbol>
<symbol id="i-dn" viewBox="0 0 10 10"><path d="M1 3l4 4 4-4" fill="none" stroke="#444" stroke-width="2"/></symbol>
<symbol id="i-chev" viewBox="0 0 10 10"><path d="M1 3l4 4 4-4" fill="none" stroke="#444"/></symbol>
<symbol id="i-detail" viewBox="0 0 16 16"><path d="M7 1l8 7-8 7z"/><path d="M1 4h7v8H1z" fill="#fff" stroke="#222"/><path d="M1 4h7v2H1z" fill="#38c"/><path d="M3 8h4M3 10h4" stroke="#38c"/></symbol>
<symbol id="i-sogou" viewBox="0 0 28 28"><path d="M4 4 22 1c2 0 3 1 3 3l2 17c0 2-1 3-3 3L8 27c-2 0-3-1-3-3L1 7c0-2 1-3 3-3z" fill="#ea5420"/><path d="M22 7C8 5 6 11 11 13l7 1c3 2 0 7-11 6" fill="none" stroke="#fff" stroke-width="4"/></symbol>
</svg>

<div class="window">
<header class="titlebar">
  <svg class="s16"><use href="#i-app"/></svg>
  <h1>无标题 - SketchUp Pro 2020</h1>
  <div class="winctl">
    <button aria-label="最小化"><svg viewBox="0 0 12 12"><path d="M1 6h10" class="k"/></svg></button>
    <button aria-label="还原"><svg viewBox="0 0 12 12"><path d="M1 3h8v8H1zM3 3V1h8v8H9" class="k"/></svg></button>
    <button aria-label="关闭"><svg viewBox="0 0 12 12"><path d="M1 1l10 10M11 1 1 11" class="k"/></svg></button>
  </div>
</header>
<nav class="menubar">
  <button>文件(F)</button><button>编辑(E)</button><button>视图(V)</button><button>相机(C)</button><button>绘图(R)</button><button>工具(T)</button><button>窗口(W)</button><button>扩展程序 (x)</button><button>帮助(H)</button>
</nav>

<div class="toolrow first-row">
  <div class="toolbar shapes" role="toolbar" aria-label="形体">
    <button class="tool" aria-label="立面"><svg><use href="#i-stand"/></svg></button>
    <button class="tool" aria-label="节点"><svg><use href="#i-dots"/></svg></button>
    <button class="tool" aria-label="翻面"><svg><use href="#i-flip"/></svg></button>
    <button class="tool" aria-label="交点"><svg><use href="#i-cross"/></svg></button>
    <button class="tool" aria-label="虚面"><svg><use href="#i-dashpoly"/></svg></button>
    <button class="tool" aria-label="拉块"><svg><use href="#i-block"/></svg></button>
    <button class="tool" aria-label="弯管"><svg><use href="#i-tube"/></svg></button>
    <button class="tool" aria-label="坡顶"><svg><use href="#i-roofbox"/></svg></button>
    <button class="tool" aria-label="球体"><svg><use href="#i-spheres"/></svg></button>
    <button class="tool" aria-label="角点"><svg><use href="#i-corner"/></svg></button>
    <button class="tool" aria-label="圆角"><svg><use href="#i-fillet"/></svg></button>
    <button class="tool" aria-label="切角"><svg><use href="#i-chamfer"/></svg></button>
    <button class="tool" aria-label="夹角"><svg><use href="#i-angle"/></svg></button>
    <button class="tool" aria-label="路径"><svg><use href="#i-polyred"/></svg></button>
    <button class="tool" aria-label="线框"><svg><use href="#i-cage"/></svg></button>
    <button class="tool" aria-label="曲面"><svg><use href="#i-sail"/></svg></button>
    <button class="tool" aria-label="柱"><svg><use href="#i-pillars"/></svg></button>
    <button class="tool" aria-label="柱阵"><svg><use href="#i-columns"/></svg></button>
    <button class="tool" aria-label="环阵"><svg><use href="#i-arc"/></svg></button>
    <button class="tool" aria-label="墙"><svg><use href="#i-fold"/></svg></button>
    <button class="tool" aria-label="开洞"><svg><use href="#i-wedge"/></svg></button>
    <button class="tool" aria-label="楼板"><svg><use href="#i-shelves"/></svg></button>
    <button class="tool" aria-label="坡道"><svg><use href="#i-ramp"/></svg></button>
    <button class="tool" aria-label="楼梯一"><svg><use href="#i-stair1"/></svg></button>
    <button class="tool" aria-label="楼梯二"><svg><use href="#i-stair2"/></svg></button>
    <button class="tool" aria-label="楼梯三"><svg><use href="#i-stair3"/></svg></button>
    <button class="tool" aria-label="旋梯"><svg><use href="#i-spiral"/></svg></button>
    <button class="tool" aria-label="扶梯"><svg><use href="#i-escalator"/></svg></button>
    <button class="tool" aria-label="窗框"><svg><use href="#i-frame"/></svg></button>
    <button class="tool" aria-label="门框"><svg><use href="#i-door"/></svg></button>
    <button class="tool" aria-label="格窗"><svg><use href="#i-grid"/></svg></button>
    <button class="tool" aria-label="网架"><svg><use href="#i-lattice"/></svg></button>
    <button class="tool" aria-label="百叶"><svg><use href="#i-chevron"/></svg></button>
    <button class="tool" aria-label="立柱"><svg><use href="#i-posts"/></svg></button>
    <button class="tool" aria-label="桁架一"><svg><use href="#i-truss"/></svg></button>
    <button class="tool" aria-label="桁架二"><svg><use href="#i-truss2"/></svg></button>
    <button class="tool" aria-label="格栅一"><svg><use href="#i-slats"/></svg></button>
    <button class="tool" aria-label="格栅二"><svg><use href="#i-slats2"/></svg></button>
    <button class="tool" aria-label="屋顶"><svg><use href="#i-hip"/></svg></button>
  </div>
</div>

<div class="toolrow">
  <div class="toolbar" role="toolbar" aria-label="曲线">
    <button class="tool" aria-label="贝塞尔"><svg><use href="#i-c1"/></svg></button>
    <button class="tool" aria-label="折线"><svg><use href="#i-c2"/></svg></button>
    <button class="tool" aria-label="折线点"><svg><use href="#i-c3"/></svg></button>
    <button class="tool" aria-label="样条"><svg><use href="#i-c4"/></svg></button>
    <button class="tool" aria-label="S线"><svg><use href="#i-c5"/></svg></button>
    <button class="tool" aria-label="绿弧"><svg><use href="#i-c6"/></svg></button>
    <button class="tool" aria-label="圆角框"><svg><use href="#i-c7"/></svg></button>
    <button class="tool" aria-label="螺线"><svg><use href="#i-c8"/></svg></button>
    <button class="tool" aria-label="弧"><svg><use href="#i-c9"/></svg></button>
    <button class="tool" aria-label="折线二"><svg><use href="#i-c10"/></svg></button>
    <button class="tool" aria-label="曲线一"><svg><use href="#i-c11"/></svg></button>
    <button class="tool" aria-label="曲线二"><svg><use href="#i-c12"/></svg></button>
    <button class="tool" aria-label="红弧"><svg><use href="#i-c13"/></svg></button>
    <span class="sep"></span>
    <button class="tool" aria-label="编辑点"><svg><use href="#i-c14"/></svg></button>
    <button class="tool" aria-label="等分"><svg><use href="#i-c15"/></svg></button>
    <button class="tool" aria-label="设置"><svg><use href="#i-wrench"/></svg></button>
    <button class="tool" aria-label="闭合"><svg><use href="#i-c16"/></svg></button>
    <button class="tool" aria-label="扇形线"><svg><use href="#i-c17"/></svg></button>
  </div>
  <div class="toolbar" role="toolbar" aria-label="联合推拉">
    <button class="tool big tan" aria-label="推拉"><svg viewBox="0 0 28 28"><use href="#i-jpush"/><path d="M17 18h11l-5 9z"/></svg></button>
    <span class="sep"></span>
    <button class="tool big c-black" aria-label="重复"><svg viewBox="0 0 28 28"><use href="#i-jpush"/><text x="21" y="8" class="tagk">=</text></svg></button>
    <button class="tool big c-blue" aria-label="J"><svg viewBox="0 0 28 28"><use href="#i-jpush"/><text x="21" y="8" class="tag">J</text></svg></button>
    <button class="tool big c-red" aria-label="R"><svg viewBox="0 0 28 28"><use href="#i-jpush"/><text x="21" y="8" class="tag">R</text></svg></button>
    <button class="tool big c-green" aria-label="V"><svg viewBox="0 0 28 28"><use href="#i-jpush"/><text x="21" y="8" class="tag">V</text></svg></button>
    <button class="tool big tan" aria-label="N"><svg viewBox="0 0 28 28"><use href="#i-jpush"/><text x="21" y="8" class="tagk">N</text></svg></button>
    <button class="tool big c-orange" aria-label="X"><svg viewBox="0 0 28 28"><use href="#i-jpush"/><text x="21" y="8" class="tag">X</text></svg></button>
    <button class="tool big c-pink" aria-label="F"><svg viewBox="0 0 28 28"><use href="#i-jpush"/><text x="21" y="8" class="tag">F</text></svg></button>
  </div>
  <div class="toolbar" role="toolbar" aria-label="植物">
    <button class="tool tree" aria-label="树"><svg><use href="#i-tree"/></svg></button>
  </div>
</div>

<div class="toolrow">
  <div class="toolbar" role="toolbar" aria-label="相机">
    <button class="tool" aria-label="环绕"><svg><use href="#i-orbit"/></svg></button>
    <button class="tool" aria-label="缩放"><svg><use href="#i-zoom"/></svg></button>
    <button class="tool" aria-label="缩放窗口"><svg><use href="#i-zoomwin"/></svg></button>
    <button class="tool" aria-label="充满视窗"><svg><use href="#i-extents"/></svg></button>
    <button class="tool" aria-label="上一个"><svg><use href="#i-prev"/></svg></button>
    <button class="tool" aria-label="平移"><svg><use href="#i-pan"/></svg></button>
    <button class="tool" aria-label="定位相机"><svg><use href="#i-person"/></svg></button>
    <button class="tool" aria-label="观察"><svg><use href="#i-eye"/></svg></button>
    <button class="tool" aria-label="漫游"><svg><use href="#i-feet"/></svg></button>
  </div>
  <div class="toolbar dynamic" role="toolbar" aria-label="动态组件">
    <button class="tool" aria-label="互动"><svg><use href="#i-finger"/></svg></button>
    <button class="tool" aria-label="组件选项"><svg><use href="#i-comp1"/></svg></button>
    <button class="tool" aria-label="组件属性"><svg><use href="#i-comp2"/></svg></button>
  </div>
  <div class="toolbar layers" role="toolbar" aria-label="图层">
    <button class="tool" aria-label="图层一"><svg><use href="#i-tag-s"/></svg></button>
    <button class="tool" aria-label="图层二"><svg><use href="#i-tag-b"/></svg></button>
    <button class="tool" aria-label="图层三"><svg><use href="#i-tag-q"/></svg></button>
    <button class="tool" aria-label="图层四"><svg><use href="#i-tag-a"/></svg></button>
  </div>
  <div class="toolbar" role="toolbar" aria-label="截面">
    <button class="tool" aria-label="剖切面"><svg><use href="#i-section"/></svg></button>
    <button class="tool" aria-label="显示剖切面"><svg><use href="#i-sec-h"/></svg></button>
    <button class="tool on" aria-label="显示剖切"><svg><use href="#i-sec-1"/></svg></button>
    <button class="tool on" aria-label="剖面填充"><svg><use href="#i-sec-2"/></svg></button>
  </div>
</div>

<div class="toolrow">
  <div class="toolbar" role="toolbar" aria-label="使用入门">
    <button class="tool on" aria-label="选择"><svg><use href="#i-select"/></svg></button>
    <span class="sep"></span>
    <button class="tool" aria-label="擦除"><svg><use href="#i-eraser"/></svg></button>
    <span class="split"><button class="tool" aria-label="直线"><svg><use href="#i-pencil"/></svg></button><button class="drop" aria-label="更多直线"></button></span>
    <span class="split"><button class="tool" aria-label="圆弧"><svg><use href="#i-pie"/></svg></button><button class="drop" aria-label="更多圆弧"></button></span>
    <span class="split"><button class="tool" aria-label="形状"><svg><use href="#i-circle"/></svg></button><button class="drop" aria-label="更多形状"></button></span>
    <span class="sep"></span>
    <button class="tool" aria-label="推/拉"><svg><use href="#i-push"/></svg></button>
    <button class="tool" aria-label="偏移"><svg><use href="#i-offset"/></svg></button>
    <button class="tool" aria-label="移动"><svg><use href="#i-move"/></svg></button>
    <button class="tool" aria-label="旋转"><svg><use href="#i-rotate"/></svg></button>
    <button class="tool" aria-label="比例"><svg><use href="#i-scale"/></svg></button>
    <span class="sep"></span>
    <button class="tool" aria-label="卷尺"><svg><use href="#i-tape"/></svg></button>
    <button class="tool" aria-label="文字"><svg><use href="#i-text"/></svg></button>
    <button class="tool" aria-label="材质"><svg><use href="#i-paint"/></svg></button>
    <span class="sep"></span>
    <button class="tool" aria-label="环绕观察"><svg><use href="#i-orbit"/></svg></button>
    <button class="tool" aria-label="平移视图"><svg><use href="#i-pan"/></svg></button>
    <button class="tool" aria-label="缩放视图"><svg><use href="#i-zoom"/></svg></button>
    <button class="tool" aria-label="缩放范围"><svg><use href="#i-extents"/></svg></button>
    <span class="sep"></span>
    <button class="tool" aria-label="模型库"><svg><use href="#i-wh"/></svg></button>
    <button class="tool" aria-label="扩展库"><svg><use href="#i-ew"/></svg></button>
    <button class="tool" aria-label="LayOut"><svg><use href="#i-layout"/></svg></button>
    <span class="sep"></span>
    <button class="tool" aria-label="扩展管理"><svg><use href="#i-ruby"/></svg></button>
    <span class="sep"></span>
    <span class="split"><button class="tool big" aria-label="账户"><svg><use href="#i-user"/></svg></button><button class="drop" aria-label="账户菜单"></button></span>
  </div>
  <div class="toolbar" role="toolbar" aria-label="样式">
    <button class="tool c-xray" aria-label="X光"><svg><use href="#i-solid"/><use href="#i-cubew" class="dark"/></svg></button>
    <button class="tool c-gray" aria-label="后边线"><svg><use href="#i-cubew"/></svg></button>
    <span class="sep"></span>
    <button class="tool" aria-label="线框显示"><svg><use href="#i-cubew"/></svg></button>
    <button class="tool c-white" aria-label="消隐"><svg><use href="#i-solid"/></svg></button>
    <button class="tool c-stone" aria-label="阴影"><svg><use href="#i-solid"/></svg></button>
    <button class="tool on" aria-label="材质贴图"><svg><use href="#i-tex"/></svg></button>
    <button class="tool" aria-label="单色"><svg><use href="#i-mono"/></svg></button>
  </div>
  <div class="toolbar" role="toolbar" aria-label="视图">
    <button class="tool" aria-label="等轴"><svg><use href="#i-iso"/></svg></button>
    <button class="tool" aria-label="俯视"><svg><use href="#i-top"/></svg></button>
    <button class="tool" aria-label="前视"><svg><use href="#i-front"/></svg></button>
    <button class="tool" aria-label="右视"><svg><use href="#i-right"/></svg></button>
    <button class="tool" aria-label="后视"><svg><use href="#i-back"/></svg></button>
    <button class="tool" aria-label="左视"><svg><use href="#i-left"/></svg></button>
  </div>
  <div class="toolbar" role="toolbar" aria-label="实体">
    <button class="tool" aria-label="外壳"><svg><use href="#i-s1"/></svg></button>
    <span class="sep"></span>
    <button class="tool" aria-label="相交"><svg><use href="#i-s2"/></svg></button>
    <button class="tool" aria-label="联合"><svg><use href="#i-s3"/></svg></button>
    <button class="tool" aria-label="减去"><svg><use href="#i-s4"/></svg></button>
    <button class="tool" aria-label="剪辑"><svg><use href="#i-s5"/></svg></button>
  </div>
  <div class="toolbar" role="toolbar" aria-label="仓库">
    <button class="tool" aria-label="获取模型"><svg><use href="#i-wh"/></svg></button>
    <button class="tool" aria-label="分享模型"><svg><use href="#i-send"/></svg></button>
    <button class="tool" aria-label="分享组件"><svg><use href="#i-send"/></svg></button>
    <button class="tool" aria-label="获取扩展"><svg><use href="#i-ew"/></svg></button>
  </div>
  <div class="toolbar" role="toolbar" aria-label="弧墙">
    <button class="tool big" aria-label="弧墙"><svg><use href="#i-arcbig"/></svg></button>
  </div>
  <div class="toolbar" role="toolbar" aria-label="布面">
    <button class="tool" aria-label="布面"><svg><use href="#i-vase"/></svg></button>
    <button class="tool" aria-label="连接"><svg><use href="#i-node"/></svg></button>
    <button class="tool" aria-label="网格体"><svg><use href="#i-gem"/></svg></button>
  </div>
</div>

<main class="work">
  <aside class="side" role="toolbar" aria-label="大工具集">
    <div class="set">
      <button class="tool on" aria-label="选择"><svg><use href="#i-select"/></svg></button><button class="tool" aria-label="制作组件"><svg><use href="#i-comp"/></svg></button>
      <button class="tool" aria-label="颜料桶"><svg><use href="#i-paint"/></svg></button><button class="tool" aria-label="橡皮擦"><svg><use href="#i-eraser"/></svg></button>
    </div>
    <div class="set">
      <button class="tool" aria-label="铅笔"><svg><use href="#i-pencil"/></svg></button><button class="tool" aria-label="手绘线"><svg><use href="#i-free"/></svg></button>
      <button class="tool" aria-label="矩形"><svg><use href="#i-rect"/></svg></button><button class="tool" aria-label="旋转矩形"><svg><use href="#i-rrect"/></svg></button>
      <button class="tool" aria-label="圆"><svg><use href="#i-circle"/></svg></button><button class="tool" aria-label="多边形"><svg><use href="#i-polygon"/></svg></button>
      <button class="tool" aria-label="圆弧"><svg><use href="#i-arc2"/></svg></button><button class="tool" aria-label="两点圆弧"><svg><use href="#i-arc3"/></svg></button>
      <button class="tool" aria-label="三点圆弧"><svg><use href="#i-arc4"/></svg></button><button class="tool" aria-label="扇形"><svg><use href="#i-pie"/></svg></button>
    </div>
    <div class="set">
      <button class="tool" aria-label="移动"><svg><use href="#i-move"/></svg></button><button class="tool" aria-label="推拉"><svg><use href="#i-push"/></svg></button>
      <button class="tool" aria-label="旋转"><svg><use href="#i-rotate"/></svg></button><button class="tool" aria-label="路径跟随"><svg><use href="#i-follow"/></svg></button>
      <button class="tool" aria-label="缩放"><svg><use href="#i-scale"/></svg></button><button class="tool" aria-label="偏移"><svg><use href="#i-offset"/></svg></button>
    </div>
    <div class="set">
      <button class="tool" aria-label="卷尺"><svg><use href="#i-tape"/></svg></button><button class="tool" aria-label="尺寸"><svg><use href="#i-dim"/></svg></button>
      <button class="tool" aria-label="量角器"><svg><use href="#i-protr"/></svg></button><button class="tool" aria-label="文字"><svg><use href="#i-text"/></svg></button>
      <button class="tool" aria-label="轴"><svg><use href="#i-axes"/></svg></button><button class="tool" aria-label="三维文字"><svg><use href="#i-text3d"/></svg></button>
    </div>
    <div class="set">
      <button class="tool" aria-label="环绕观察"><svg><use href="#i-orbit"/></svg></button><button class="tool" aria-label="平移"><svg><use href="#i-pan"/></svg></button>
      <button class="tool" aria-label="缩放"><svg><use href="#i-zoom"/></svg></button><button class="tool" aria-label="缩放窗口"><svg><use href="#i-zoomwin"/></svg></button>
      <button class="tool" aria-label="充满视窗"><svg><use href="#i-extents"/></svg></button><button class="tool" aria-label="上一个"><svg><use href="#i-prev"/></svg></button>
    </div>
    <div class="set">
      <button class="tool" aria-label="定位相机"><svg><use href="#i-person"/></svg></button><button class="tool" aria-label="观察"><svg><use href="#i-eye"/></svg></button>
      <button class="tool" aria-label="漫游"><svg><use href="#i-feet"/></svg></button><button class="tool" aria-label="剖切面"><svg><use href="#i-section"/></svg></button>
    </div>
    <div class="set">
      <button class="tool" aria-label="模型库"><svg><use href="#i-wh"/></svg></button><button class="tool" aria-label="扩展库"><svg><use href="#i-ew"/></svg></button>
      <button class="tool" aria-label="LayOut"><svg><use href="#i-layout"/></svg></button><button class="tool" aria-label="扩展管理"><svg><use href="#i-ruby"/></svg></button>
    </div>
  </aside>

  <section class="viewport" aria-label="绘图区">
    <svg class="axes" viewBox="0 0 1560 814" preserveAspectRatio="xMidYMid slice" shape-rendering="crispEdges">
      <path d="M868 485 878 0" stroke="#0a0ab4"/>
      <path d="M868 485 1194 12" stroke="#14a81e"/>
      <path d="M868 485l692 74" stroke="#b40a14"/>
      <path d="M868 485 0 394" stroke="#b4323c" stroke-dasharray="1 3"/>
      <path d="M868 485 643 814" stroke="#3caa50" stroke-dasharray="1 4"/>
      <path d="M868 485 861 814" stroke="#2828b4" stroke-dasharray="1 3"/>
    </svg>
  </section>

  <aside class="panel">
    <header class="panel-head"><h2>baidujingyan</h2>
      <button class="pin" aria-label="固定"><svg viewBox="0 0 10 12"><path d="M1 7h8M3 1h4v6M3 1v6M6 1v6M5 7v4" class="k"/></svg></button>
      <button class="close" aria-label="关闭"><svg><use href="#i-x"/></svg></button>
    </header>
    <div class="tray">
      <div class="tray-body">
        <div class="bar"><svg><use href="#i-tri-r"/></svg><h3>组件</h3><button aria-label="关闭组件"><svg><use href="#i-x"/></svg></button></div>
        <div class="bar"><svg><use href="#i-tri-r"/></svg><h3>样式</h3><button aria-label="关闭样式"><svg><use href="#i-x"/></svg></button></div>
        <div class="bar"><svg><use href="#i-tri-r"/></svg><h3>标记</h3><button aria-label="关闭标记"><svg><use href="#i-x"/></svg></button></div>
        <div class="bar"><svg><use href="#i-tri-r"/></svg><h3>阴影</h3><button aria-label="关闭阴影"><svg><use href="#i-x"/></svg></button></div>
        <div class="bar"><svg><use href="#i-tri-r"/></svg><h3>场景</h3><button aria-label="关闭场景"><svg><use href="#i-x"/></svg></button></div>
        <div class="bar"><svg><use href="#i-tri-r"/></svg><h3>工具向导</h3><button aria-label="关闭工具向导"><svg><use href="#i-x"/></svg></button></div>
        <div class="bar"><svg><use href="#i-tri-r"/></svg><h3>柔化边线</h3><button aria-label="关闭柔化边线"><svg><use href="#i-x"/></svg></button></div>
        <div class="bar"><svg><use href="#i-tri-r"/></svg><h3>照片匹配</h3><button aria-label="关闭照片匹配"><svg><use href="#i-x"/></svg></button></div>
        <div class="bar"><svg><use href="#i-tri-d"/></svg><h3>图元信息</h3><button aria-label="关闭图元信息"><svg><use href="#i-x"/></svg></button></div>
        <div class="entity"><p>没有选择内容</p></div>
        <div class="bar"><svg><use href="#i-tri-d"/></svg><h3>材质</h3><button aria-label="关闭材质"><svg><use href="#i-x"/></svg></button></div>
        <div class="material">
          <svg class="preview" viewBox="0 0 64 69" preserveAspectRatio="none"><path d="M0 0h64v69H0z" fill="#fff"/><path d="M0 2 64 66H0z" fill="#a1b6c5"/><path d="M0 66h64" stroke="#8c9aa5"/></svg>
          <input type="text" value="预设" aria-label="材质名称" disabled>
          <div class="mat-tools">
            <button aria-label="显示辅助窗格"><svg viewBox="0 0 18 18"><path d="M4 2h11v7H4z"/><path d="M7 5h5" stroke="#fff" stroke-width="2"/><path d="M4 10h11v6H4z" fill="#fff" stroke="#aaa"/><path d="M6 15l3-4 4 4z"/></svg></button>
            <button aria-label="创建材质"><svg viewBox="0 0 18 18"><path d="M3 5l8-5 6 2v8l-6 5-8-2z" fill="#222"/><path d="M4 5l7-3 4 1-5 3z" fill="#a79f86"/><path d="M10 7v8M4 8l7 2 6-4" stroke="#776" fill="none"/><circle cx="5" cy="13" r="4.500" fill="#fff" stroke="#111"/><path d="M2 13h6M5 10v6" stroke="#111" stroke-width="1.500"/></svg></button>
            <button aria-label="默认材质"><svg class="s22" viewBox="0 0 22 22"><path d="M0 0h22v22H0z" fill="#fff"/><path d="M0 0l22 22H0z" fill="#a1b6c5"/></svg></button>
          </div>
        </div>
        <div class="tabs"><button class="tab active">选择</button><button class="tab">编辑</button>
          <button class="dropper" aria-label="样本颜料"><svg viewBox="0 0 18 18"><path d="M1 17l2-5 7-7 3 3-7 7z" fill="#ccb98a" stroke="#333"/><path d="M10 4l4-3c3-1 4 2 3 3l-4 4 0 2-5-5z" fill="#222"/></svg></button></div>
        <div class="nav">
          <button aria-label="后退"><svg viewBox="0 0 14 14"><path d="M1 7l6-6v3h6v6H7v3z" fill="#f6f6f6" stroke="#888"/></svg></button>
          <button aria-label="前进"><svg viewBox="0 0 14 14"><path d="M13 7 7 1v3H1v6h6v3z" fill="#f6f6f6" stroke="#888"/></svg></button>
          <button aria-label="在模型中"><svg class="s18" viewBox="0 0 18 18"><path d="M3 9h12v8H3z" fill="#fff" stroke="#222"/><path d="M1 10l8-8 8 8M4 6V2h2v2" fill="none" stroke="#222" stroke-width="1.500"/><path d="M7 10h4v7H7z" fill="#111"/></svg></button>
          <span class="combo"><select aria-label="材质集"><option>指定色彩</option></select><svg><use href="#i-chev"/></svg></span>
          <button aria-label="详细信息"><svg class="s18"><use href="#i-detail"/></svg></button>
        </div>
        <div class="palette">
          <div class="swatches">
            <button class="sw s1" aria-label="色彩1"></button><button class="sw s2" aria-label="色彩2"></button><button class="sw s3" aria-label="色彩3"></button><button class="sw s4" aria-label="色彩4"></button>
            <button class="sw s5" aria-label="色彩5"></button><button class="sw s6" aria-label="色彩6"></button><button class="sw s7" aria-label="色彩7"></button><button class="sw s8" aria-label="色彩8"></button>
            <button class="sw s9" aria-label="色彩9"></button><button class="sw s10" aria-label="色彩10"></button><button class="sw s11" aria-label="色彩11"></button><button class="sw s12" aria-label="色彩12"></button>
            <button class="sw s13" aria-label="色彩13"></button><button class="sw s13" aria-label="色彩14"></button><button class="sw s13" aria-label="色彩15"></button><button class="sw s13" aria-label="色彩16"></button>
          </div>
          <div class="scroll"><svg><use href="#i-up"/></svg><span class="thumb"></span><svg class="end"><use href="#i-dn"/></svg></div>
        </div>
        <div class="pane2"></div>
        <div class="nav second">
          <span class="combo"><select aria-label="第二材质集"><option></option></select><svg><use href="#i-chev"/></svg></span>
          <button aria-label="第二详细信息"><svg class="s18"><use href="#i-detail"/></svg></button>
        </div>
        <div class="textures"><button class="sw" aria-label="石材"><svg viewBox="0 0 45 45"><rect width="45" height="45" filter="url(#stone)"/></svg></button></div>
      </div>
      <div class="scroll"><svg><use href="#i-up"/></svg><span class="thumb"></span><svg class="end"><use href="#i-dn"/></svg></div>
    </div>
  </aside>
</main>

<footer class="status">
  <svg viewBox="0 0 16 16"><circle cx="8" cy="8" r="7" fill="none" stroke="#999"/><path d="M8 3c4 0 4 4 1 6v4H7V9C4 7 4 3 8 3z" fill="#999"/></svg>
  <svg viewBox="0 0 16 16"><circle cx="8" cy="8" r="7" fill="none" stroke="#111" stroke-width="1.500"/><circle cx="8" cy="4" r="1.500"/><path d="M6 6h4v4H9v3H7v-3H6z"/></svg>
  <span class="rule"></span>
  <p>选择对象。切换到扩充选择。拖动鼠标选择多项。</p>
  <output class="measure" aria-label="数值"></output>
</footer>
</div>

<footer class="taskbar">
  <button class="app" aria-label="开始"><svg class="s16" viewBox="0 0 16 16"><path d="M0 2l7-1v6H0zM8 1l8-1v7H8zM0 8h7v7l-7-1zM8 8h8v8l-8-1z"/></svg></button>
  <button class="app" aria-label="搜索"><svg class="s18" viewBox="0 0 18 18"><circle cx="11" cy="7" r="5.500" fill="none" stroke="#111" stroke-width="1.500"/><path d="M7 11l-6 6" stroke="#111" stroke-width="1.500"/></svg></button>
  <button class="app" aria-label="Cortana"><svg class="s18" viewBox="0 0 18 18"><circle cx="9" cy="9" r="7" fill="none" stroke="#111" stroke-width="2"/></svg></button>
  <button class="app run first" aria-label="星星"><svg viewBox="0 0 24 24"><path d="M12 1l4 7 7 1-5 6 1 8-7-3-7 3 1-8-5-6 7-1z" fill="#f9e47c" stroke="#cfae4e"/><path d="M8 11v2M14 12l3-1M8 16c3 2 5 1 7-1" fill="none" stroke="#974"/></svg></button>
  <button class="app run" aria-label="Firefox"><svg viewBox="0 0 24 24"><path d="M12 3l3-3c5 4 9 7 8 14-1 6-6 10-11 10S1 19 1 13c0-5 2-7 4-10l3 2z" fill="url(#fox)"/><circle cx="12" cy="13" r="5" fill="#7543e0"/><path d="M6 8c4-2 7 0 9 1-4-1-4 3-1 4-3 3-8 0-8-5z" fill="#ff9a2a"/></svg></button>
  <button class="app run" aria-label="浏览器"><svg viewBox="0 0 24 24"><circle cx="12" cy="12" r="11" fill="#f07c1a"/><path d="M5 15C4 8 11 5 20 6c1 1 2 3 1 4l-5-1 2 4-3-1 0 3-4-2c-3 1-4 4-2 8-2-1-4-3-4-6z" fill="#fff"/></svg></button>
  <button class="app run" aria-label="压缩"><svg viewBox="0 0 24 24"><path d="M0 3h10l2 2h12v10H0z" fill="url(#sky)"/><path d="M0 14h24v4H0z" fill="#4aa2e0"/><path d="M0 17h24v3H0z" fill="#e8c62a"/><path d="M0 20h24v3H0z" fill="#6a9a28"/><path d="M16 1h4v22h-4z" fill="#5a3318"/><path d="M15 10h6v5h-6z" fill="#222" stroke="#ca6"/></svg></button>
  <button class="app run current" aria-label="SketchUp"><svg><use href="#i-app"/></svg></button>
  <div class="notify">
    <svg viewBox="0 0 12 12"><path d="M1 8l5-5 5 5" fill="none" stroke="#111" stroke-width="1.500"/></svg>
    <span class="ime">中</span>
    <svg class="s18"><use href="#i-sogou"/></svg>
    <time><span>23:15</span><span>2021/5/18</span></time>
    <button class="bell" aria-label="通知"><svg viewBox="0 0 26 26"><path d="M1 2h16v12H8l-3 4v-4H1z"/><path d="M4 6h10M4 10h10" stroke="#ddd"/><circle cx="17" cy="17" r="8" fill="#d4d4d4" stroke="#777"/><text x="13" y="22" class="count">3</text></svg></button>
  </div>
</footer>

<div class="imebar">
  <svg class="logo"><use href="#i-sogou"/></svg>
  <button>中</button>
  <button aria-label="标点"><svg viewBox="0 0 16 16"><circle cx="4" cy="5" r="2" fill="none" stroke="currentColor" stroke-width="1.500"/><path d="M11 8c3-1 4 4 0 6 1-2 1-2 0-3z" fill="currentColor"/></svg></button>
  <button aria-label="表情"><svg viewBox="0 0 16 16"><g fill="none" stroke="currentColor" stroke-width="1.500"><circle cx="8" cy="8" r="7"/><path d="M4 9c1 4 7 4 8 0"/></g><path d="M5 4h2v3H5zM9 4h2v3H9z" fill="currentColor"/></svg></button>
  <button aria-label="语音"><svg viewBox="0 0 16 16"><rect x="5" y="0" width="6" height="10" rx="3" fill="currentColor"/><path d="M2 7c0 7 12 7 12 0M8 12v4" fill="none" stroke="currentColor" stroke-width="2"/></svg></button>
  <button aria-label="键盘"><svg viewBox="0 0 16 16"><rect x="0" y="2" width="16" height="12" rx="1" fill="currentColor"/><path d="M2 5h12M2 8h12M4 11h8" stroke="#fff" stroke-dasharray="2 1"/></svg></button>
  <button class="off" aria-label="用户"><svg viewBox="0 0 16 16"><circle cx="7" cy="4" r="3" fill="currentColor"/><path d="M1 14c0-8 12-8 12 0z" fill="currentColor"/><path d="M9 9h6v6H9z" fill="#fff" stroke="currentColor"/></svg></button>
  <button aria-label="皮肤"><svg viewBox="0 0 16 16"><path d="M5 1c1 2 5 2 6 0l5 3-2 4-2-1v8H4V7L2 8 0 4z" fill="currentColor"/></svg></button>
  <button aria-label="工具箱"><svg viewBox="0 0 16 16"><path d="M1 1h6v6H1zM1 9h6v6H1zM9 9h6v6H9z" fill="currentColor"/><path d="M10 2h4v4h-4z" fill="none" stroke="currentColor" stroke-width="1.500"/></svg></button>
</div>

<div class="brand">
  <svg class="deer" viewBox="0 0 84 112"><path d="M6 14l9 5 6-4 3 6 8 6-1 3-9 0c-4 8-3 16 2 22 10 9 28 4 38 12 5 4 8 8 6 13l3 12 2 22h-6l-4-14-2 14h-8l5-5-1-14-5-16c-9 2-18 1-27-1l-4 19 1 19h-11l4-5 2-22-3-18C2 63-3 53 4 41c5-7 9-10 8-17z" fill="#cdcdcd"/><path d="M24 18c5-4 14-3 20-2 12 4 18 2 24-3l15-8M29 16c-6-5-6-9-4-14M35 15c-4-4-4-9-1-14M41 15c-1-6 2-9 6-15M50 17c6-3 12-4 16-12M52 12l12 2M38 16l8 4 16 1 7-8" fill="none" stroke="#cdcdcd" stroke-width="2"/></svg>
  <div class="brand-text"><strong>3D溜溜网</strong><span>3D66.COM</span></div>
</div>
</body>
</html>
```
FILE: styles.css
```css
* { box-sizing: border-box; }
body {
  margin: 0;
  height: 100vh;
  display: flex;
  flex-direction: column;
  overflow: hidden;
  background: #f0f0f0;
  color: #000;
  font: 12px/16px "Open Sans", "Noto Sans CJK SC", sans-serif;
}
h1, h2, h3, p { margin: 0; font: inherit; }
button { padding: 0; border: 0; background: none; color: inherit; font: inherit; }
svg { display: block; }
.sprite { position: absolute; width: 0; height: 0; }
.s16 { width: 16px; height: 16px; }
.s18 { width: 18px; height: 18px; }

/* shared icon paint */
.k { fill: none; stroke: #222; }
.k2 { fill: none; stroke: #222; stroke-width: 2; }
.w { fill: #fff; stroke: #333; }
.t { fill: #9c9984; stroke: #333; }
.g { fill: #8c8c8c; }
.r { fill: none; stroke: #e0202c; }
.r2 { fill: none; stroke: #d81c26; stroke-width: 2; }
.R { fill: #d81c26; }
.b { fill: none; stroke: #4a50d8; }
.b2 { fill: none; stroke: #4549b8; stroke-width: 2; }
.glyph { font: 10px "Liberation Serif", serif; }
.tag, .tagk { font: bold 11px "Liberation Mono", monospace; fill: currentColor; }
.tagk { fill: #222; }
.count { font: bold 13px "Open Sans", sans-serif; }
.dark { color: #34485a; }

.window { flex: 1; min-height: 0; display: flex; flex-direction: column; }

/* title and menu */
.titlebar { display: flex; align-items: center; height: 24px; padding-left: 2px; gap: 5px; background: #fff; font-size: 13px; }
.titlebar h1 { font-family: Roboto, "Noto Sans CJK SC", sans-serif; }
.winctl { margin-left: auto; display: flex; }
.winctl button { width: 46px; height: 22px; display: grid; place-items: center; }
.winctl svg { width: 12px; height: 12px; }
.menubar { display: flex; gap: 15px; height: 17px; padding-left: 7px; background: #fff; }

/* toolbars */
.toolrow { display: flex; height: 38px; }
.first-row { height: 40px; }
.toolbar, .side { background: #f2f2f2; }
.toolbar { display: flex; align-items: center; padding-right: 1px; border-right: 1px solid #a8a8a8; border-bottom: 1px solid #a8a8a8; }
.toolbar::before { content: ""; width: 10px; height: 30px; background: radial-gradient(circle at 5px 2px, #b4b4b4 1px, transparent 2px) 0 0 / 10px 4px; }
.shapes { margin-left: 64px; padding-top: 2px; }
.dynamic { margin-left: 37px; }
.layers { margin-left: 806px; }
.tool { width: 34px; height: 34px; display: grid; place-items: center; }
.tool svg { width: 24px; height: 24px; }
.tool.big svg { width: 28px; height: 28px; }
.tool.tree { background: #f7f7ec; }
.tool.tree svg { width: 30px; height: 30px; }
.tool.on { background: #c5e0f5; outline: 1px solid #9ccbef; outline-offset: -1px; }
.sep { width: 8px; height: 30px; background: linear-gradient(#777, #777) 3px 0 / 1px 100% no-repeat; }
.split { display: flex; padding-left: 3px; }
.drop { width: 19px; display: grid; align-items: center; }
.drop::before { content: ""; width: 0; border: 6px solid transparent; border-top: 7px solid #000; border-bottom: 0; }
.tan { color: #91703f; }
.c-black { color: #2c2c2c; }
.c-blue { color: #1418d8; }
.c-red { color: #d8382e; }
.c-green { color: #18d82c; }
.c-orange { color: #f5810f; }
.c-pink { color: #e012e0; }
.c-xray { color: #7f9fb8; }
.c-gray { color: #999; }
.c-white { color: #fff; }
.c-stone { color: #a19e8c; }

/* work area */
.work { flex: 1; min-height: 0; display: flex; }
.side { width: 73px; padding-top: 80px; background: linear-gradient(#f0f0f0 80px, #f2f2f2 80px); }
.side::before { content: ""; display: block; height: 7px; margin: 0 3px; background: radial-gradient(circle at 2px 3px, #b4b4b4 1px, transparent 2px) 0 0 / 4px 7px; }
.set { display: grid; grid-template-columns: 34px 34px; padding: 0 2px; }
.set + .set { margin-top: 3px; padding-top: 4px; border-top: 1px solid #888; }
.viewport { flex: 1; min-width: 0; border: solid #666; border-width: 2px 0 0 1px; background: linear-gradient(#9bd3ea, #a9dbec 11px, #bfc0c7 11px); overflow: hidden; }
.axes { width: 100%; height: 100%; fill: none; }

/* tray */
.panel { width: 286px; padding-left: 6px; display: flex; flex-direction: column; padding-bottom: 22px; }
.panel-head { display: flex; align-items: center; height: 20px; padding: 0 4px; gap: 8px; background: linear-gradient(#bccadb, #dbe5f1); }
.panel-head h2 { margin-right: auto; }
.pin svg { width: 10px; height: 12px; }
.close { width: 12px; height: 12px; display: grid; place-items: center; background: #c8504f; color: #fff; }
.close svg { width: 8px; height: 8px; }
.tray { flex: 1; min-height: 0; display: flex; border: 1px solid #a8a8a8; border-bottom: 1px solid #111; }
.tray-body { flex: 1; min-width: 0; display: flex; flex-direction: column; padding: 1px 0 0 2px; }
.bar { flex: none; display: flex; align-items: center; height: 18px; margin-top: 1px; padding: 0 2px 0 7px; gap: 7px; border: 1px solid #b0b0b0; background: linear-gradient(#e8e8e8, #b4b4b4); }
.bar > svg { width: 7px; height: 8px; }
.bar h3 { flex: 1; }
.bar button { width: 14px; height: 14px; display: grid; place-items: center; border: 1px solid #999; background: #e2e2e2; }
.bar button svg { width: 6px; height: 6px; }
.entity { flex: 1; margin: 0 1px 0 4px; }
.entity p { padding: 5px 0 6px 4px; border-bottom: 1px solid #a0a0a0; font-size: 13px; font-weight: bold; }
.material { display: flex; align-items: flex-start; gap: 4px; height: 75px; padding: 1px 2px 0; border-bottom: 1px solid #999; }
.preview { width: 66px; height: 71px; border: 1px solid #8c8c8c; }
.material input { flex: 1; min-width: 0; height: 20px; padding: 0 2px; border: 1px solid #ccc; background: #f0f0f0; color: #777; font: inherit; }
.mat-tools { display: grid; gap: 5px; width: 22px; justify-items: center; }
.mat-tools svg { width: 18px; height: 19px; }
.mat-tools .s22 { width: 22px; height: 22px; }
.tabs { display: flex; align-items: flex-end; height: 26px; border-bottom: 1px solid #d8d8d8; }
.tab { width: 38px; height: 18px; padding-right: 4px; border: 1px solid #d8d8d8; border-bottom: 0; }
.tab.active { width: 44px; height: 21px; padding-right: 8px; border: 0; background: #fff; }
.dropper { margin: 0 3px 3px auto; }
.dropper svg { width: 18px; height: 18px; }
.nav { display: flex; align-items: center; height: 31px; margin-left: 3px; padding: 0 2px 0 7px; gap: 9px; border-bottom: 1px solid #999; }
.nav button svg { width: 14px; height: 14px; }
.nav button .s18 { width: 18px; height: 18px; }
.combo { flex: 1; display: grid; margin: 0 -3px; align-items: center; align-self: end; }
.combo > * { grid-area: 1 / 1; }
.combo svg { width: 10px; height: 10px; margin-right: 3px; justify-self: end; }
.combo select { width: 100%; height: 23px; padding: 0 4px; appearance: none; border: 1px solid #777; border-bottom: 0; border-radius: 0; background: #fff; color: #000; font: inherit; }
.palette { display: flex; height: 163px; margin-left: 3px; background: #fff; border-bottom: 1px solid #ddd; }
.swatches { flex: 1; display: grid; grid-template-columns: repeat(4, 49px); grid-auto-rows: 49px; gap: 3px; padding: 1px 3px; overflow: hidden; }
.sw { width: 49px; height: 49px; padding: 1px; border: 1px solid #999; background-color: #fff; background-clip: content-box; }
.sw svg { width: 45px; height: 45px; }
.s1 { background-color: #db7093; }
.s2 { background-color: #c71585; }
.s3 { background-color: #ff1493; }
.s4 { background-color: #ff69b4; }
.s5 { background-color: #ffb6c1; }
.s6 { background-color: #ffc0cb; }
.s7 { background-color: #ffe4e1; }
.s8 { background-color: #fff0f5; }
.s9 { background-color: #faf0e6; }
.s10 { background-color: #fffafa; }
.s11 { background-color: #fff5ee; }
.s12 { background-color: #ffe4c4; }
.s13 { background-color: #e4705f; }
.scroll { width: 15px; display: flex; flex-direction: column; align-items: center; padding: 3px 0 4px; background: #f0f0f0; }
.scroll svg { width: 10px; height: 10px; }
.scroll .thumb { width: 15px; height: 17px; margin-top: 3px; background: #cdcdcd; }
.scroll .end { margin-top: auto; }
.tray > .scroll { width: 19px; padding: 6px 2px 4px 0; }
.pane2 { height: 22px; margin-top: 3px; border-top: 1px solid #888; border-bottom: 1px solid #999; background: linear-gradient(#f0f0f0 3px, #888 3px, #888 4px, #e1e1e1 4px); }
.textures { height: 53px; padding: 2px 0 0 162px; background: #fff; }

/* status */
.status { display: flex; align-items: center; height: 28px; padding: 0 6px 0 5px; border-top: 1px solid #fafafa; font-size: 16px; }
.status svg { width: 16px; height: 16px; margin-right: 14px; }
.rule { width: 1px; height: 10px; margin-right: 10px; background: #888; }
.status svg + .rule { margin-left: -4px; }
.measure { width: 220px; height: 24px; margin-left: auto; border: 1px solid #aab8c8; }

/* taskbar */
.taskbar { display: flex; height: 40px; background: #d6d6d6; }
.app { width: 48px; display: grid; place-items: center; }
.app svg { width: 24px; height: 24px; }
.app .s16 { width: 16px; height: 16px; }
.app .s18 { width: 18px; height: 18px; }
.app.run { width: 49px; background: linear-gradient(#1a78c8, #1a78c8) center bottom / 40px 2px no-repeat; }
.app.first { margin-left: 2px; }
.app.current { width: 48px; background: #efefef linear-gradient(#1a78c8, #1a78c8) center bottom / 100% 2px no-repeat; }
.notify { margin-left: auto; display: flex; align-items: center; margin-right: 4px; padding-right: 11px; gap: 16px; border-right: 1px solid #aaa; }
.notify svg { width: 12px; height: 12px; }
.notify .s18 { width: 18px; height: 18px; }
.ime { margin-right: -2px; margin-left: -2px; font-size: 14px; color: #555; }
time { display: grid; width: 62px; text-align: center; line-height: 18px; font-size: 12px; white-space: nowrap; }
.bell svg { width: 26px; height: 26px; }

/* floating input-method bar */
.imebar { position: fixed; right: 0; bottom: 276px; display: flex; align-items: center; width: 206px; height: 23px; background: #fff; box-shadow: 0 0 3px #999; color: #1c6fc4; }
.imebar button { width: 22px; display: grid; place-items: center; font-size: 16px; font-weight: bold; }
.imebar button svg { width: 16px; height: 16px; }
.imebar .off { color: #b4bccb; }
.logo { flex: none; width: 28px; height: 28px; margin-right: 2px; }

/* brand badge over the corner */
.brand { position: fixed; right: 96px; bottom: 37px; display: flex; align-items: flex-start; gap: 15px; width: 360px; height: 185px; padding: 33px 12px; background: #212f55; color: #d2d4d8; }
.deer { flex: none; width: 84px; height: 112px; }
.brand-text { display: grid; white-space: nowrap; }
.brand-text strong { font: 700 56px/66px "Noto Sans CJK SC", sans-serif; }
.brand-text span { font: 300 46px/42px Inter, sans-serif; }
```
